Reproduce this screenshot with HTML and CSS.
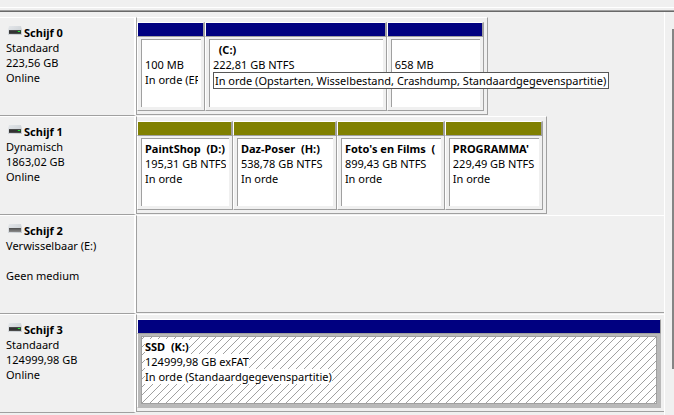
FILE: index.html
```html
<!DOCTYPE html>
<html lang="nl">
<head>
<meta charset="utf-8">
<title>Schijfbeheer</title>
<link rel="stylesheet" href="styles.css">
</head>
<body>
<svg class="defs" aria-hidden="true">
  <defs>
    <linearGradient id="lid" x1="0" y1="0" x2="1" y2="1">
      <stop offset="0" stop-color="#e4e7ea"/><stop offset="1" stop-color="#c6cbd0"/>
    </linearGradient>
    <linearGradient id="slot" x1="0" y1="0" x2="0" y2="1">
      <stop offset="0" stop-color="#4c4c4c"/><stop offset="1" stop-color="#8c8c8c"/>
    </linearGradient>
    <symbol id="drive" viewBox="0 0 14 10">
      <path d="M1 0h12l1 4v5H0V4z" fill="url(#lid)"/>
      <path d="M1 4h12v4H1z" fill="#4a4a4a"/>
      <path d="M1 5h12v2H1z" fill="#333"/>
      <path d="M9 5h4v1H9z" fill="#176b20"/>
      <path d="M10 5h2v1h-2z" fill="#2be03c"/>
    </symbol>
    <symbol id="removable" viewBox="0 0 14 10">
      <path d="M1 0h12l1 4v5H0V4z" fill="url(#lid)"/>
      <path d="M1 4h12v4H1z" fill="url(#slot)"/>
    </symbol>
    <pattern id="hatch" width="8" height="8" patternUnits="userSpaceOnUse">
      <path d="M1 0h1v1h-1zM0 1h1v1h-1zM7 2h1v1h-1zM6 3h1v1h-1zM5 4h1v1h-1zM4 5h1v1h-1zM3 6h1v1h-1zM2 7h1v1h-1z" fill="#a0a0a0" shape-rendering="crispEdges"/>
    </pattern>
  </defs>
</svg>
<div class="splitter"></div>
<main class="view">
  <div class="disks">
    <section class="disk">
      <div class="info">
        <h2><svg class="icon"><use href="#drive"/></svg>Schijf 0</h2>
        <p>Standaard</p><p>223,56 GB</p><p>Online</p>
      </div>
      <div class="track">
        <div class="volumes system">
          <div class="volume efi"><div class="bar"></div><div class="body"><div class="label">
            <h3></h3><p>100 MB</p><p>In orde (EF</p></div></div></div>
          <div class="volume windows"><div class="bar"></div><div class="body"><div class="label">
            <h3>  (C:)</h3><p>222,81 GB NTFS</p></div></div>
            <div class="tooltip" role="tooltip">In orde (Opstarten, Wisselbestand, Crashdump, Standaardgegevenspartitie)</div></div>
          <div class="volume recovery"><div class="bar"></div><div class="body"><div class="label">
            <h3></h3><p>658 MB</p></div></div></div>
        </div>
      </div>
    </section>
    <section class="disk">
      <div class="info">
        <h2><svg class="icon"><use href="#drive"/></svg>Schijf 1</h2>
        <p>Dynamisch</p><p>1863,02 GB</p><p>Online</p>
      </div>
      <div class="track">
        <div class="volumes dynamic">
          <div class="volume paint"><div class="bar"></div><div class="body"><div class="label">
            <h3>PaintShop  (D:)</h3><p>195,31 GB NTFS</p><p>In orde</p></div></div></div>
          <div class="volume poser"><div class="bar"></div><div class="body"><div class="label">
            <h3>Daz-Poser  (H:)</h3><p>538,78 GB NTFS</p><p>In orde</p></div></div></div>
          <div class="volume films"><div class="bar"></div><div class="body"><div class="label">
            <h3>Foto's en Films  (</h3><p>899,43 GB NTFS</p><p>In orde</p></div></div></div>
          <div class="volume programs"><div class="bar"></div><div class="body"><div class="label">
            <h3>PROGRAMMA'</h3><p>229,49 GB NTFS</p><p>In orde</p></div></div></div>
        </div>
      </div>
    </section>
    <section class="disk">
      <div class="info">
        <h2><svg class="icon"><use href="#removable"/></svg>Schijf 2</h2>
        <p>Verwisselbaar (E:)</p><p></p><p>Geen medium</p>
      </div>
      <div class="track"><div class="volumes full"></div></div>
    </section>
    <section class="disk">
      <div class="info">
        <h2><svg class="icon"><use href="#drive"/></svg>Schijf 3</h2>
        <p>Standaard</p><p>124999,98 GB</p><p>Online</p>
      </div>
      <div class="track">
        <div class="volumes full">
          <div class="volume selected"><div class="bar"></div><div class="body">
            <svg class="hatching" aria-hidden="true"><rect width="100%" height="100%" fill="url(#hatch)"/></svg>
            <div class="label">
            <h3>SSD  (K:)</h3><p>124999,98 GB exFAT</p><p>In orde (Standaardgegevenspartitie)</p></div></div></div>
        </div>
      </div>
    </section>
  </div>
  <div class="scrollbar"><div class="thumb"></div></div>
</main>
</body>
</html>
```
FILE: styles.css
```css
* { box-sizing: border-box; }
body {
  margin: 0;
  min-height: 100vh;
  display: flex;
  flex-direction: column;
  background: #f0f0f0;
  color: #000;
  font: 11px/15px "Segoe UI", "Noto Sans", sans-serif;
}
h2, h3, p { margin: 0; font-size: inherit; line-height: 15px; min-height: 15px; white-space: pre; }
h2, h3 { font-weight: 700; }
.defs { position: absolute; width: 0; height: 0; }

.splitter {
  height: 12px;
  border-bottom: 1px solid #696969;
  background: linear-gradient(#f0f0f0 7px, #fff 7px 8px, #f0f0f0 8px 10px, #a0a0a0 10px);
}
.view { flex: 1; display: flex; }
.disks { flex: 1; min-width: 0; padding-top: 5px; border-right: 1px solid #fff; }

.disk { display: flex; min-height: 99px; }
.info {
  width: 136px;
  padding: 7px 6px;
  border-top: 1px solid #fff;
  border-bottom: 1px solid #a0a0a0;
  border-right: 2px solid #fff;
}
.info h2 { display: flex; align-items: center; padding-left: 2px; }
.icon { width: 14px; height: 10px; margin: 0 2px 4px 0; flex: none; }

.track { flex: 1; min-width: 0; display: flex; padding-bottom: 1px; }
.volumes {
  display: flex;
  padding: 4px 3px 3px 0;
  border: 1px solid #a0a0a0;
  border-top-color: #fff;
}
.system { width: 66.6%; }
.dynamic { width: 77.8%; }
.full { width: 100%; border-right: 0; padding-right: 3px; }

.volume { position: relative; min-width: 0; display: flex; flex-direction: column; }
.efi { flex: 68 1 0; }
.windows { flex: 182 1 0; }
.recovery { flex: 97 1 0; }
.paint { flex: 96 1 0; }
.poser { flex: 104 1 0; }
.films { flex: 108 1 0; }
.programs { flex: 98 1 0; }
.selected { flex: 1 1 0; }

.bar {
  height: 14px;
  background: #000080;
  border-top: 1px solid #fff;
  border-left: 1px solid #fff;
  border-right: 2px solid #a0a0a0;
}
.dynamic .bar { background: #808000; }
.full .bar { border-right-width: 1px; }
.body {
  position: relative;
  flex: 1;
  display: flex;
  padding: 2px 3px 3px;
  border: 1px solid #a0a0a0;
  border-left-color: #fff;
}
.label {
  flex: 1;
  min-width: 0;
  overflow: hidden;
  padding-top: 2px;
  background: #fff;
  border-top: 1px solid #a0a0a0;
  border-left: 1px solid #a0a0a0;
}
.label h3, .label p { overflow: hidden; margin: 0 3px; }

.selected .body { background: #b9b9b9; border-right-color: #b9b9b9; border-bottom-color: #b9b9b9; }
.selected .label { position: relative; background: none; border: 1px solid #a0a0a0; }
.selected .label h3, .selected .label p { width: fit-content; background: #fff; }
.hatching {
  position: absolute;
  top: 3px;
  left: 4px;
  width: calc(100% - 8px);
  height: calc(100% - 7px);
  background: #fff;
}

.tooltip {
  position: absolute;
  z-index: 1;
  top: 50px;
  left: 8px;
  padding: 0 2px 0 1px;
  background: #fff;
  border: 1px solid #575757;
  white-space: nowrap;
}

.scrollbar { width: 9px; padding: 17px 0 46px 7px; }
.thumb { height: 100%; background: #858585; }
```
